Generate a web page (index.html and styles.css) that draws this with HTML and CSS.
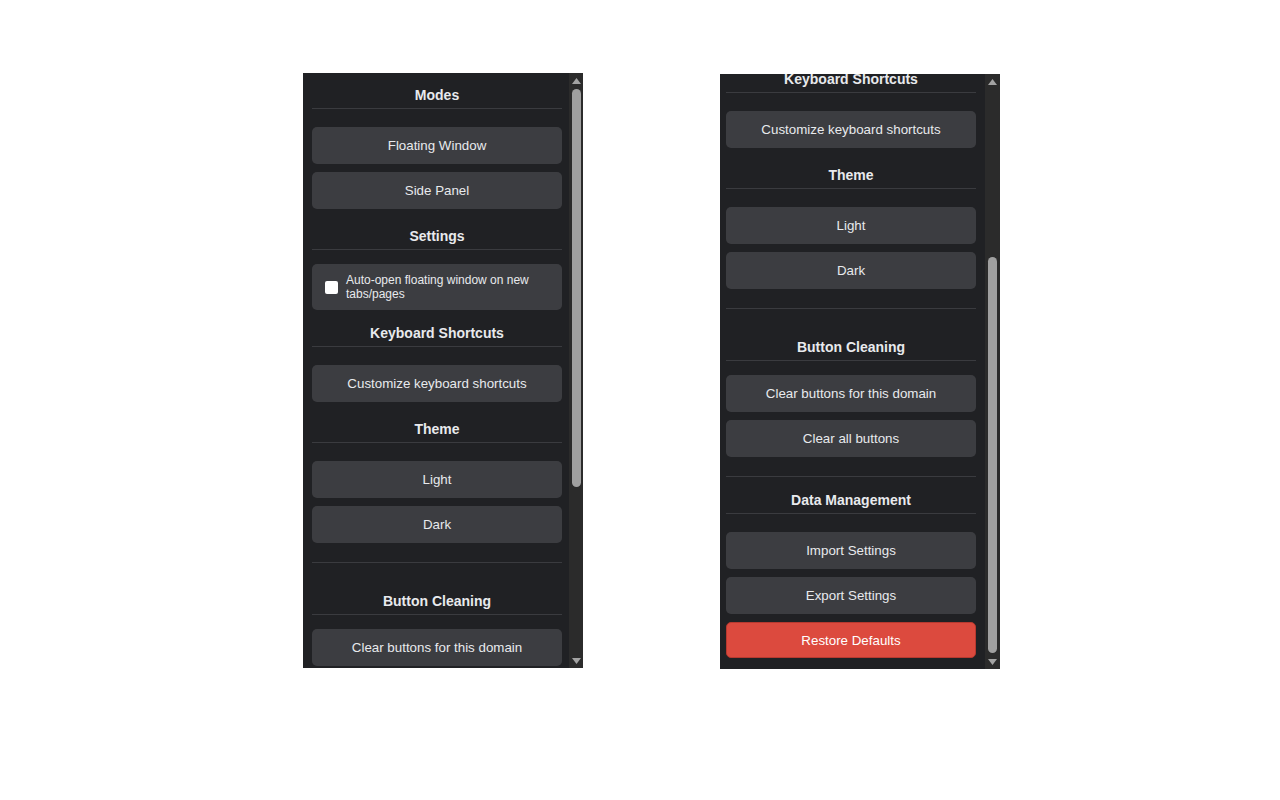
FILE: index.html
```html
<!DOCTYPE html>
<html lang="en">
<head>
<meta charset="utf-8">
<title>Settings panels</title>
<link rel="stylesheet" href="styles.css">
</head>
<body>
<div class="stage">
  <div class="panel">
    <div class="viewport viewport-left">
      <div class="list">
        <div class="title first">Modes</div>
        <button class="btn">Floating Window</button>
        <button class="btn">Side Panel</button>
        <div class="title">Settings</div>
        <label class="check-row"><input type="checkbox" class="check"><span>Auto-open floating window on new tabs/pages</span></label>
        <div class="title">Keyboard Shortcuts</div>
        <button class="btn">Customize keyboard shortcuts</button>
        <div class="title">Theme</div>
        <button class="btn">Light</button>
        <button class="btn">Dark</button>
        <div class="rule"></div>
        <div class="title spaced">Button Cleaning</div>
        <button class="btn">Clear buttons for this domain</button>
        <button class="btn">Clear all buttons</button>
        <div class="rule rule-tight"></div>
        <div class="title">Data Management</div>
        <button class="btn">Import Settings</button>
        <button class="btn">Export Settings</button>
        <button class="btn btn-danger">Restore Defaults</button>
      </div>
    </div>
    <div class="scrollbar sb-left">
      <div class="sb-arrow"><svg width="9" height="6" viewBox="0 0 9 6"><polygon points="4.5,0 9,6 0,6" fill="#a3a3a3"/></svg></div>
      <div class="sb-track"><div class="sb-thumb thumb-left"></div></div>
      <div class="sb-arrow"><svg width="9" height="6" viewBox="0 0 9 6"><polygon points="0,0 9,0 4.5,6" fill="#a3a3a3"/></svg></div>
    </div>
  </div>

  <div class="panel panel-right">
    <div class="viewport viewport-right">
      <div class="list list-right">
        <div class="title first">Modes</div>
        <button class="btn">Floating Window</button>
        <button class="btn">Side Panel</button>
        <div class="title">Settings</div>
        <label class="check-row"><input type="checkbox" class="check"><span>Auto-open floating window on new tabs/pages</span></label>
        <div class="title">Keyboard Shortcuts</div>
        <button class="btn">Customize keyboard shortcuts</button>
        <div class="title">Theme</div>
        <button class="btn">Light</button>
        <button class="btn">Dark</button>
        <div class="rule"></div>
        <div class="title spaced">Button Cleaning</div>
        <button class="btn">Clear buttons for this domain</button>
        <button class="btn">Clear all buttons</button>
        <div class="rule rule-tight"></div>
        <div class="title">Data Management</div>
        <button class="btn">Import Settings</button>
        <button class="btn">Export Settings</button>
        <button class="btn btn-danger">Restore Defaults</button>
      </div>
    </div>
    <div class="scrollbar sb-right">
      <div class="sb-arrow"><svg width="9" height="6" viewBox="0 0 9 6"><polygon points="4.5,0 9,6 0,6" fill="#a3a3a3"/></svg></div>
      <div class="sb-track"><div class="sb-thumb thumb-right"></div></div>
      <div class="sb-arrow"><svg width="9" height="6" viewBox="0 0 9 6"><polygon points="0,0 9,0 4.5,6" fill="#a3a3a3"/></svg></div>
    </div>
  </div>
</div>
</body>
</html>
```

FILE: styles.css
```css
html, body {
  margin: 0;
  padding: 0;
  background: #ffffff;
}

body {
  font-family: "Liberation Sans", Arial, sans-serif;
  color: #e8eaed;
}

.stage {
  display: flex;
  align-items: flex-start;
  gap: 137px;
  padding: 73px 0 0 303px;
}

.panel {
  width: 280px;
  height: 595px;
  display: flex;
  background: #202124;
}

.panel-right {
  margin-top: 1px;
}

.viewport {
  flex: 1;
  min-width: 0;
  display: flex;
  flex-direction: column;
  overflow: hidden;
}

.viewport-left {
  justify-content: flex-start;
  padding: 0 7px 0 9px;
}

.viewport-right {
  justify-content: flex-end;
  padding: 0 9px 0 6px;
}

.list {
  flex-shrink: 0;
  display: flex;
  flex-direction: column;
}

.list > * {
  flex-shrink: 0;
}

.list-right {
  padding-bottom: 7px;
}

.title {
  margin: 15px 0 14px;
  padding-bottom: 5px;
  border-bottom: 1px solid #3a3b3f;
  font-size: 14px;
  line-height: 16px;
  font-weight: bold;
  text-align: center;
  color: #e8eaed;
}

.title.first {
  margin-top: 14px;
}

.title.spaced {
  margin-bottom: 10px;
}

.btn {
  display: block;
  width: 100%;
  height: 37px;
  margin: 4px 0;
  padding: 0 8px;
  border: none;
  border-radius: 5px;
  background: #3c3d41;
  color: #e8eaed;
  font-family: "Liberation Sans", Arial, sans-serif;
  font-size: 13.333px;
  text-align: center;
  cursor: pointer;
}

.btn-danger {
  background: #dc4a3e;
  border: 1px solid #b8392f;
  color: #ffffff;
  height: 36px;
  box-sizing: border-box;
}

.check-row {
  display: flex;
  align-items: center;
  padding: 9px 10px 9px 13px;
  border-radius: 5px;
  background: #3c3d41;
  font-size: 12px;
  line-height: 14px;
  color: #e8eaed;
}

.check {
  appearance: none;
  -webkit-appearance: none;
  flex-shrink: 0;
  width: 13px;
  height: 13px;
  margin: 0 8px 0 0;
  border-radius: 2px;
  background: #ffffff;
}

.rule {
  height: 1px;
  margin: 15px 0 15px;
  background: #3a3b3f;
}

.rule.rule-tight {
  margin-bottom: 0;
}

.scrollbar {
  display: flex;
  flex-direction: column;
  background: #2b2b2b;
}

.sb-left {
  width: 14px;
}

.sb-right {
  width: 15px;
}

.sb-arrow {
  height: 15px;
  display: flex;
  align-items: center;
  justify-content: center;
  flex-shrink: 0;
}

.sb-track {
  flex: 1;
  display: flex;
  flex-direction: column;
  align-items: center;
}

.sb-thumb {
  width: 9px;
  border-radius: 5px;
  background: #a0a0a0;
}

.thumb-left {
  margin-top: 1px;
  height: 398px;
}

.thumb-right {
  margin-top: 168px;
  height: 396px;
}
```
